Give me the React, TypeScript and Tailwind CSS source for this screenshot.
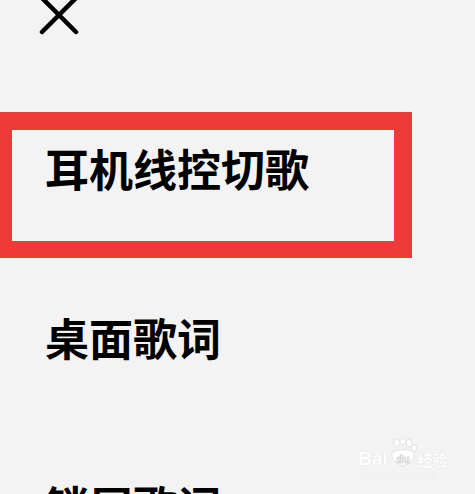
const cjk = { fontFamily: '"Noto Sans CJK SC", "Noto Sans", sans-serif' };

const items = ["桌面歌词", "锁屏歌词"];

function CloseIcon() {
  return (
    <svg width="42" height="42" viewBox="0 0 42 42" className="-mt-[6px] ml-[38px]">
      <path d="M4 4 L38 38 M38 4 L4 38" stroke="#000" strokeWidth="4.5" strokeLinecap="round" fill="none" />
    </svg>
  );
}

function Watermark() {
  return (
    <div className="absolute left-[358px] top-[438px] flex flex-col items-start text-white" style={{ textShadow: "0 0 1px #cfcfcf" }}>
      <div className="flex items-end gap-[1px] leading-none">
        <span className="text-[19px] font-bold" style={{ fontFamily: '"Liberation Sans", sans-serif' }}>Bai</span>
        <svg width="28" height="30" viewBox="0 0 28 30">
          <g fill="#fff" stroke="#d4d4d4" strokeWidth="0.6">
            <ellipse cx="8" cy="5" rx="3" ry="3.6" />
            <ellipse cx="14" cy="3.5" rx="3" ry="3.4" />
            <ellipse cx="20" cy="5" rx="3" ry="3.6" />
            <ellipse cx="25" cy="10" rx="2.6" ry="3.2" />
            <path d="M3 14 Q14 9 25 14 Q27 24 14 28 Q1 24 3 14 Z" />
          </g>
          <text x="14" y="25" textAnchor="middle" fontSize="11" fontWeight="700" fill="#fff" stroke="#cfcfcf" strokeWidth="0.4" fontFamily="Liberation Sans, sans-serif">du</text>
        </svg>
        <span className="text-[15px] font-bold mb-[1px]" style={cjk}>经验</span>
      </div>
      <span className="text-[10px] leading-none mt-[2px] tracking-[0.2px]" style={{ fontFamily: '"Liberation Serif", serif' }}>jingyan.baidu.com</span>
    </div>
  );
}

export default function App() {
  return (
    <div className="relative w-[475px] h-[494px] overflow-hidden bg-[#f3f3f3] text-black" style={cjk}>
      <div className="flex h-[112px] items-start">
        <CloseIcon />
      </div>
      <div className="w-[412px] h-[146px] border-[#ef3a3a] border-l-[12px] border-t-[18px] border-r-[18px] border-b-[17px] pl-[33px] pt-[16px]">
        <p className="text-[44px] leading-[44px] font-bold">耳机线控切歌</p>
      </div>
      <div className="flex flex-col gap-[124px] pl-[45px] pt-[57px]">
        {items.map((item) => (
          <p key={item} className="text-[44px] leading-[44px] font-bold">
            {item}
          </p>
        ))}
      </div>
      <Watermark />
    </div>
  );
}
